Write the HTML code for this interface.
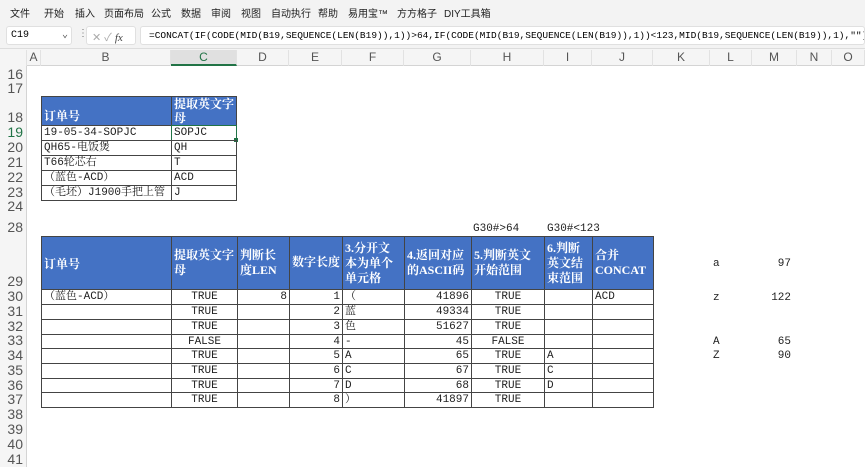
<!DOCTYPE html>
<html><head><meta charset="utf-8">
<style>
*{margin:0;padding:0;box-sizing:border-box}
body{width:865px;height:467px;overflow:hidden;background:#fff;position:relative;font-family:"Liberation Sans","Noto Sans CJK SC",sans-serif}
.a{position:absolute}
#menu{left:0;top:0;width:865px;height:22px;background:#f3f3f3;font-size:10px;color:#222}
#menu span{position:absolute;top:5px}
#fb{left:0;top:22px;width:865px;height:27px;background:#f3f3f3;border-bottom:1px solid #ddd}
.box{position:absolute;background:#fff;border:1px solid #e0e0e0;border-radius:3px}
#colh{left:0;top:49px;width:865px;height:17px;background:#f5f5f5;border-bottom:1px solid #d4d4d4;font-size:12px;color:#555}
#colh div{position:absolute;top:1px;text-align:center;border-right:1px solid #e2e2e2;height:16px}
#rowh{left:0;top:66px;width:27px;height:401px;background:#f5f5f5;border-right:1px solid #d4d4d4;font-size:14px;color:#555}
#rowh div{position:absolute;right:3px;line-height:13px}
.c{position:absolute;border:1px solid #444;font-family:"Liberation Mono","Noto Serif CJK SC",monospace;font-size:11px;color:#222;white-space:nowrap;overflow:hidden;padding:0 2px;line-height:15px}
.h{background:#4472c4;color:#fff;font-weight:bold;font-family:"Liberation Serif","Noto Serif CJK SC",serif;font-size:12px;line-height:15px;white-space:normal}
.r{text-align:right}.m{text-align:center}
.t{position:absolute;font-family:"Liberation Mono","Noto Serif CJK SC",monospace;font-size:11px;color:#222}
</style></head><body>
<div id="menu" class="a">
<span style="left:10px">文件</span><span style="left:44px">开始</span><span style="left:75px">插入</span><span style="left:104px">页面布局</span><span style="left:151px">公式</span><span style="left:181px">数据</span><span style="left:211px">审阅</span><span style="left:241px">视图</span><span style="left:271px">自动执行</span><span style="left:318px">帮助</span><span style="left:348px">易用宝™</span><span style="left:397px">方方格子</span><span style="left:444px">DIY工具箱</span>
</div>
<div id="fb" class="a">
<div class="box" style="left:6px;top:4px;width:66px;height:19px;font-family:'Liberation Mono',monospace;font-size:10px;padding:3px 0 0 4px">C19<span style="position:absolute;right:3px;top:2px;color:#555">⌄</span></div>
<div class="a" style="left:78px;top:6px;font-size:10px;color:#777">⋮</div>
<div class="box" style="left:86px;top:4px;width:50px;height:19px;font-size:11px;color:#aaa;padding:2px 0 0 5px">✕ ✓ <i style="color:#444;font-family:'Liberation Serif',serif">fx</i></div>
<div class="box" style="left:140px;top:4px;width:725px;height:19px;font-family:'Liberation Mono','Noto Sans CJK SC',monospace;font-size:9.5px;padding:3px 0 0 8px;white-space:nowrap;overflow:hidden">=CONCAT(IF(CODE(MID(B19,SEQUENCE(LEN(B19)),1))&gt;64,IF(CODE(MID(B19,SEQUENCE(LEN(B19)),1))&lt;123,MID(B19,SEQUENCE(LEN(B19)),1),""),""))</div>
</div>
<div id="colh" class="a">
<div style="left:0;width:27px;background:#f5f5f5"></div>
<div style="left:27px;width:14px">A</div><div style="left:41px;width:130px">B</div>
<div style="left:171px;width:66px;background:#e0e0e0;border-bottom:2px solid #217346;color:#217346">C</div>
<div style="left:237px;width:52px">D</div><div style="left:289px;width:53px">E</div><div style="left:342px;width:62px">F</div><div style="left:404px;width:67px">G</div><div style="left:471px;width:73px">H</div><div style="left:544px;width:48px">I</div><div style="left:592px;width:61px">J</div><div style="left:653px;width:57px">K</div><div style="left:710px;width:42px">L</div><div style="left:752px;width:45px">M</div><div style="left:797px;width:35px">N</div><div style="left:832px;width:33px">O</div>
</div>
<div id="rowh" class="a">
<div style="top:2px">16</div><div style="top:16px">17</div><div style="top:45px">18</div><div style="top:60px;color:#217346">19</div><div style="top:75px">20</div><div style="top:90px">21</div><div style="top:105px">22</div><div style="top:120px">23</div><div style="top:134px">24</div><div style="top:155px">28</div><div style="top:209px">29</div><div style="top:224px">30</div><div style="top:239px">31</div><div style="top:254px">32</div><div style="top:268px">33</div><div style="top:283px">34</div><div style="top:298px">35</div><div style="top:313px">36</div><div style="top:327px">37</div><div style="top:342px">38</div><div style="top:357px">39</div><div style="top:372px">40</div><div style="top:387px">41</div>
</div>

<div class="c h" style="left:41px;top:96px;width:131px;height:30px;padding-top:12px">订单号</div>
<div class="c h" style="left:171px;top:96px;width:66px;height:30px;line-height:14px">提取英文字母</div>
<div class="c" style="left:41px;top:125px;width:131px;height:16px">19-05-34-SOPJC</div>
<div class="c" style="left:171px;top:125px;width:66px;height:16px;border:1px solid #217346">SOPJC</div>
<div class="a" style="left:234px;top:138px;width:4px;height:4px;background:#217346"></div>
<div class="c" style="left:41px;top:140px;width:131px;height:16px">QH65-电饭煲</div>
<div class="c" style="left:171px;top:140px;width:66px;height:16px">QH</div>
<div class="c" style="left:41px;top:155px;width:131px;height:16px">T66轮芯右</div>
<div class="c" style="left:171px;top:155px;width:66px;height:16px">T</div>
<div class="c" style="left:41px;top:170px;width:131px;height:16px">（蓝色-ACD）</div>
<div class="c" style="left:171px;top:170px;width:66px;height:16px">ACD</div>
<div class="c" style="left:41px;top:185px;width:131px;height:16px">（毛坯）J1900手把上管</div>
<div class="c" style="left:171px;top:185px;width:66px;height:16px">J</div>

<div class="t" style="left:473px;top:223px">G30#&gt;64</div>
<div class="t" style="left:547px;top:223px">G30#&lt;123</div>

<div class="c h" style="left:41px;top:236px;width:131px;height:54px;padding-top:20px">订单号</div>
<div class="c h" style="left:171px;top:236px;width:67px;height:54px;padding-top:11px">提取英文字母</div>
<div class="c h" style="left:237px;top:236px;width:53px;height:54px;padding-top:11px">判断长度LEN</div>
<div class="c h" style="left:289px;top:236px;width:54px;height:54px;padding-top:18px">数字长度</div>
<div class="c h" style="left:342px;top:236px;width:63px;height:54px;padding-top:4px;padding-right:6px">3.分开文本为单个单元格</div>
<div class="c h" style="left:404px;top:236px;width:68px;height:54px;padding-top:11px">4.返回对应的ASCII码</div>
<div class="c h" style="left:471px;top:236px;width:74px;height:54px;padding-top:11px;padding-right:6px">5.判断英文开始范围</div>
<div class="c h" style="left:544px;top:236px;width:49px;height:54px;padding-top:4px;padding-right:6px">6.判断英文结束范围</div>
<div class="c h" style="left:592px;top:236px;width:62px;height:54px;padding-top:11px;padding-right:12px">合并CONCAT</div>

<div class="a" style="left:0;top:0">
<div class="c" style="left:41px;top:289px;width:131px;height:16px">（蓝色-ACD）</div>
<div class="c m" style="left:171px;top:289px;width:67px;height:16px">TRUE</div><div class="c r" style="left:237px;top:289px;width:53px;height:16px">8</div><div class="c r" style="left:289px;top:289px;width:54px;height:16px">1</div><div class="c" style="left:342px;top:289px;width:63px;height:16px">（</div><div class="c r" style="left:404px;top:289px;width:68px;height:16px">41896</div><div class="c m" style="left:471px;top:289px;width:74px;height:16px">TRUE</div><div class="c" style="left:544px;top:289px;width:49px;height:16px"></div><div class="c" style="left:592px;top:289px;width:62px;height:16px">ACD</div>

<div class="c" style="left:41px;top:304px;width:131px;height:16px"></div><div class="c m" style="left:171px;top:304px;width:67px;height:16px">TRUE</div><div class="c" style="left:237px;top:304px;width:53px;height:16px"></div><div class="c r" style="left:289px;top:304px;width:54px;height:16px">2</div><div class="c" style="left:342px;top:304px;width:63px;height:16px">蓝</div><div class="c r" style="left:404px;top:304px;width:68px;height:16px">49334</div><div class="c m" style="left:471px;top:304px;width:74px;height:16px">TRUE</div><div class="c" style="left:544px;top:304px;width:49px;height:16px"></div><div class="c" style="left:592px;top:304px;width:62px;height:16px"></div>

<div class="c" style="left:41px;top:319px;width:131px;height:16px"></div><div class="c m" style="left:171px;top:319px;width:67px;height:16px">TRUE</div><div class="c" style="left:237px;top:319px;width:53px;height:16px"></div><div class="c r" style="left:289px;top:319px;width:54px;height:16px">3</div><div class="c" style="left:342px;top:319px;width:63px;height:16px">色</div><div class="c r" style="left:404px;top:319px;width:68px;height:16px">51627</div><div class="c m" style="left:471px;top:319px;width:74px;height:16px">TRUE</div><div class="c" style="left:544px;top:319px;width:49px;height:16px"></div><div class="c" style="left:592px;top:319px;width:62px;height:16px"></div>

<div class="c" style="left:41px;top:334px;width:131px;height:15px"></div><div class="c m" style="left:171px;top:334px;width:67px;height:15px">FALSE</div><div class="c" style="left:237px;top:334px;width:53px;height:15px"></div><div class="c r" style="left:289px;top:334px;width:54px;height:15px">4</div><div class="c" style="left:342px;top:334px;width:63px;height:15px">-</div><div class="c r" style="left:404px;top:334px;width:68px;height:15px">45</div><div class="c m" style="left:471px;top:334px;width:74px;height:15px">FALSE</div><div class="c" style="left:544px;top:334px;width:49px;height:15px"></div><div class="c" style="left:592px;top:334px;width:62px;height:15px"></div>

<div class="c" style="left:41px;top:348px;width:131px;height:16px"></div><div class="c m" style="left:171px;top:348px;width:67px;height:16px">TRUE</div><div class="c" style="left:237px;top:348px;width:53px;height:16px"></div><div class="c r" style="left:289px;top:348px;width:54px;height:16px">5</div><div class="c" style="left:342px;top:348px;width:63px;height:16px">A</div><div class="c r" style="left:404px;top:348px;width:68px;height:16px">65</div><div class="c m" style="left:471px;top:348px;width:74px;height:16px">TRUE</div><div class="c" style="left:544px;top:348px;width:49px;height:16px">A</div><div class="c" style="left:592px;top:348px;width:62px;height:16px"></div>

<div class="c" style="left:41px;top:363px;width:131px;height:16px"></div><div class="c m" style="left:171px;top:363px;width:67px;height:16px">TRUE</div><div class="c" style="left:237px;top:363px;width:53px;height:16px"></div><div class="c r" style="left:289px;top:363px;width:54px;height:16px">6</div><div class="c" style="left:342px;top:363px;width:63px;height:16px">C</div><div class="c r" style="left:404px;top:363px;width:68px;height:16px">67</div><div class="c m" style="left:471px;top:363px;width:74px;height:16px">TRUE</div><div class="c" style="left:544px;top:363px;width:49px;height:16px">C</div><div class="c" style="left:592px;top:363px;width:62px;height:16px"></div>

<div class="c" style="left:41px;top:378px;width:131px;height:15px"></div><div class="c m" style="left:171px;top:378px;width:67px;height:15px">TRUE</div><div class="c" style="left:237px;top:378px;width:53px;height:15px"></div><div class="c r" style="left:289px;top:378px;width:54px;height:15px">7</div><div class="c" style="left:342px;top:378px;width:63px;height:15px">D</div><div class="c r" style="left:404px;top:378px;width:68px;height:15px">68</div><div class="c m" style="left:471px;top:378px;width:74px;height:15px">TRUE</div><div class="c" style="left:544px;top:378px;width:49px;height:15px">D</div><div class="c" style="left:592px;top:378px;width:62px;height:15px"></div>

<div class="c" style="left:41px;top:392px;width:131px;height:16px"></div><div class="c m" style="left:171px;top:392px;width:67px;height:16px">TRUE</div><div class="c" style="left:237px;top:392px;width:53px;height:16px"></div><div class="c r" style="left:289px;top:392px;width:54px;height:16px">8</div><div class="c" style="left:342px;top:392px;width:63px;height:16px">）</div><div class="c r" style="left:404px;top:392px;width:68px;height:16px">41897</div><div class="c m" style="left:471px;top:392px;width:74px;height:16px">TRUE</div><div class="c" style="left:544px;top:392px;width:49px;height:16px"></div><div class="c" style="left:592px;top:392px;width:62px;height:16px"></div>
</div>

<div class="t" style="left:713px;top:258px">a</div><div class="t" style="left:775px;top:258px;width:16px;text-align:right">97</div>
<div class="t" style="left:713px;top:292px">z</div><div class="t" style="left:765px;top:292px;width:26px;text-align:right">122</div>
<div class="t" style="left:713px;top:336px">A</div><div class="t" style="left:775px;top:336px;width:16px;text-align:right">65</div>
<div class="t" style="left:713px;top:350px">Z</div><div class="t" style="left:775px;top:350px;width:16px;text-align:right">90</div>
</body></html>
